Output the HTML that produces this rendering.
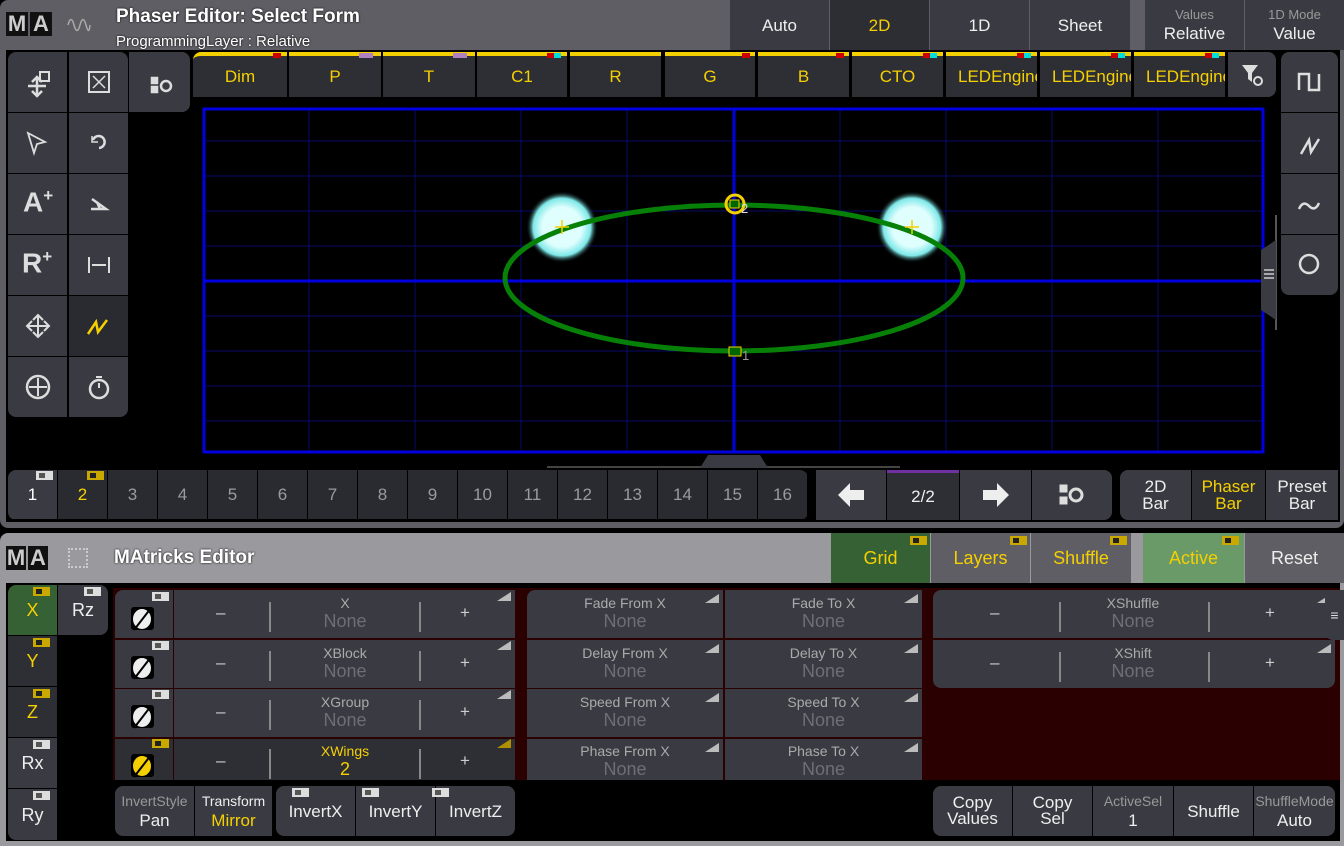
<!DOCTYPE html>
<html><head><meta charset="utf-8"><style>
*{box-sizing:border-box;margin:0;padding:0}
body{width:1344px;height:846px;background:#000;position:relative;overflow:hidden;font-family:"Liberation Sans",sans-serif;color:#eee}
.a{position:absolute}
.b{position:absolute;background:#3a3b42;display:flex;align-items:center;justify-content:center;text-align:center;line-height:1}
.y{color:#f5d000 !important}
.g{color:#888}
.tab{position:absolute;top:52px;height:45px;background:#2e2f35;border-top:4px solid #f5d000;color:#f5d000;font-size:17px;display:flex;align-items:center;justify-content:center;overflow:hidden;white-space:nowrap}
.pg{position:absolute;top:470px;width:49px;height:49px;background:#2a2b30;color:#9a9aa0;font-size:17px;display:flex;align-items:center;justify-content:center}
.tool{position:absolute;width:59px;height:60px;background:#3a3b42}
.tog{position:absolute;width:17px;height:9px;background:#ddd;border:1px solid #ddd}
.tog::after{content:"";position:absolute;left:2px;top:1px;width:6px;height:5px;background:#555}
.togy{background:#c9a800;border-color:#c9a800}
.togy::after{background:#222}
.cell{position:absolute;background:#3a3b42;text-align:center}
.lbl{font-size:14px;color:#aaa}
.val{font-size:18px;color:#6e6e74}
.tri{position:absolute;right:4px;top:4px;width:0;height:0;border-left:14px solid transparent;border-bottom:9px solid #bbb}
</style></head><body>
<div class="a" style="left:0;top:0;width:1344px;height:528px;background:#5e5e64;border-radius:8px"></div>
<div class="a" style="left:6px;top:50px;width:1334px;height:472px;background:#000"></div>
<div class="a" style="left:6px;top:12px;width:22px;height:24px;background:#111;color:#ccc;font-weight:bold;font-size:22px;text-align:center;line-height:24px">M</div>
<div class="a" style="left:30px;top:12px;width:22px;height:24px;background:#111;color:#ccc;font-weight:bold;font-size:22px;text-align:center;line-height:24px">A</div>
<svg class="a" style="left:66px;top:14px" width="26" height="22"><path d="M2 11 Q5 0 8 11 T14 11 T20 11 T24 11" stroke="#aaa" fill="none" stroke-width="1.5"/></svg>
<div class="a" style="left:116px;top:6px;font-size:19px;color:#fff;font-weight:bold;text-shadow:0 0 2px #000">Phaser Editor: Select Form</div>
<div class="a" style="left:116px;top:33px;font-size:15px;color:#fff;text-shadow:0 0 2px #000">ProgrammingLayer : Relative</div>
<div class="b" style="left:730px;top:0;width:99px;height:50px;font-size:17px">Auto</div>
<div class="b y" style="left:830px;top:0;width:99px;height:50px;font-size:17px;background:#2d2e34">2D</div>
<div class="b" style="left:930px;top:0;width:99px;height:50px;font-size:17px">1D</div>
<div class="b" style="left:1030px;top:0;width:100px;height:50px;font-size:17px">Sheet</div>
<div class="b" style="left:1145px;top:0;width:99px;height:50px;flex-direction:column"><span style="font-size:13px;color:#999">Values</span><span style="font-size:17px;margin-top:4px">Relative</span></div>
<div class="b" style="left:1245px;top:0;width:99px;height:50px;flex-direction:column"><span style="font-size:13px;color:#999">1D Mode</span><span style="font-size:17px;margin-top:4px">Value</span></div>
<div class="a" style="left:8px;top:52px;width:182px;height:60px;background:#000;border-radius:8px;overflow:hidden"><div class="a" style="left:121px;top:0;width:61px;height:60px;background:#3a3b42"></div></div>
<div class="a" style="left:8px;top:52px;width:120px;height:365px;background:#000;border-radius:8px;overflow:hidden">
<div class="tool" style="left:0;top:0"></div><div class="tool" style="left:61px;top:0"></div>
<div class="tool" style="left:0;top:61px"></div><div class="tool" style="left:61px;top:61px"></div>
<div class="tool" style="left:0;top:122px"></div><div class="tool" style="left:61px;top:122px"></div>
<div class="tool" style="left:0;top:183px"></div><div class="tool" style="left:61px;top:183px"></div>
<div class="tool" style="left:0;top:244px"></div><div class="tool" style="left:61px;top:244px;background:#2a2b30"></div>
<div class="tool" style="left:0;top:305px"></div><div class="tool" style="left:61px;top:305px"></div>
</div>
<svg class="a" style="left:0;top:52px" width="190" height="365" fill="none" stroke="#ddd" stroke-width="2.5">
<path d="M28 34 L46 34 M37 26 L37 44 M32 30 L37 25 L42 30 M32 39 L37 44 L42 39"/><rect x="40" y="20" width="9" height="9" stroke-width="2"/>
<rect x="89" y="20" width="20" height="20" stroke-width="2"/><path d="M93 24 L105 36 M105 24 L93 36" stroke-width="1.5"/>
<path d="M152 26 h5 v5 h-5z M152 35 h5 v5 h-5z" fill="#ddd"/><circle cx="166" cy="34" r="5"/>
<path d="M28 81 L45 90 L37 92 L34 101 Z" stroke-width="1.8"/>
<path d="M93 88 A6 6 0 1 1 99 96" /><path d="M92 84 L92 90 L98 90" stroke-width="1.5"/>
<path d="M91 157 L106 157 L92 147 M97 150 L100 157"/>
<path d="M89 205 v16 M109 205 v16 M92 213 h14" stroke-width="2"/>
<path d="M27 274 h22 M38 263 v22 M33 268 l5 -5 5 5 M33 280 l5 5 5 -5 M32 269 l-5 5 5 5 M44 269 l5 5 -5 5" stroke-width="2"/>
<path d="M88 282 L96 270 L98 280 L107 268" stroke="#f5d000"/>
<circle cx="38" cy="335" r="11"/><path d="M38 326 v18 M29 335 h18" stroke-width="2"/>
<circle cx="99" cy="337" r="9"/><path d="M96 325 h6 M99 331 v5" stroke-width="2"/>
</svg>
<div class="a" style="left:23px;top:186px;font-size:28px;font-weight:bold;color:#ddd">A<sup style="font-size:17px">+</sup></div>
<div class="a" style="left:22px;top:247px;font-size:28px;font-weight:bold;color:#ddd">R<sup style="font-size:17px">+</sup></div>
<div class="tab" style="left:193px;width:94px;border-radius:8px 0 0 0">Dim</div>
<div class="tab" style="left:289px;width:92px">P</div>
<div class="tab" style="left:383px;width:92px">T</div>
<div class="tab" style="left:477px;width:90px">C1</div>
<div class="tab" style="left:570px;width:91px">R</div>
<div class="tab" style="left:665px;width:90px">G</div>
<div class="tab" style="left:758px;width:91px">B</div>
<div class="tab" style="left:852px;width:91px">CTO</div>
<div class="tab" style="left:946px;width:91px;justify-content:flex-start;padding-left:12px">LEDEngine</div>
<div class="tab" style="left:1040px;width:91px;justify-content:flex-start;padding-left:12px">LEDEngine</div>
<div class="tab" style="left:1134px;width:91px;justify-content:flex-start;padding-left:12px">LEDEngine</div>
<div class="b" style="left:1228px;top:52px;width:48px;height:45px;border-radius:0 8px 8px 0"><svg width="26" height="26" fill="#ddd"><path d="M3 3 h16 l-6 8 v9 l-4 -3 v-6z"/><circle cx="19" cy="19" r="4" fill="none" stroke="#ddd" stroke-width="2"/></svg></div>
<div class="a" style="left:273px;top:53px;width:8px;height:5px;background:#c00"></div>
<div class="a" style="left:359px;top:53px;width:14px;height:5px;background:#b080c0"></div>
<div class="a" style="left:453px;top:53px;width:14px;height:5px;background:#b080c0"></div>
<div class="a" style="left:547px;top:53px;width:14px;height:5px;background:#c00;border-right:7px solid #0dd"></div>
<div class="a" style="left:742px;top:53px;width:8px;height:5px;background:#c00"></div>
<div class="a" style="left:836px;top:53px;width:8px;height:5px;background:#c00"></div>
<div class="a" style="left:923px;top:53px;width:14px;height:5px;background:#c00;border-right:7px solid #0dd"></div>
<div class="a" style="left:1017px;top:53px;width:14px;height:5px;background:#c00;border-right:7px solid #0dd"></div>
<div class="a" style="left:1111px;top:53px;width:14px;height:5px;background:#c00;border-right:7px solid #0dd"></div>
<div class="a" style="left:1205px;top:53px;width:14px;height:5px;background:#c00;border-right:7px solid #0dd"></div>
<div class="a" style="left:1281px;top:52px;width:57px;height:243px;background:#000;border-radius:8px;overflow:hidden">
<div class="a" style="left:0;top:0;width:57px;height:60px;background:#3a3b42"></div>
<div class="a" style="left:0;top:61px;width:57px;height:60px;background:#3a3b42"></div>
<div class="a" style="left:0;top:122px;width:57px;height:60px;background:#3a3b42"></div>
<div class="a" style="left:0;top:183px;width:57px;height:60px;background:#3a3b42"></div>
</div>
<svg class="a" style="left:1281px;top:52px" width="57" height="243" fill="none" stroke="#ddd" stroke-width="2.5">
<path d="M18 38 V22 H28 V38 H38 V22"/><path d="M20 102 L28 88 L30 100 L38 87"/><path d="M18 157 Q22 148 28 154 T38 151"/><circle cx="28" cy="212" r="9"/>
</svg>
<svg class="a" style="left:0;top:0" width="1344" height="470">
<defs><radialGradient id="gl"><stop offset="0.55" stop-color="#dffefe"/><stop offset="0.8" stop-color="#7ee8e8"/><stop offset="1" stop-color="#000" stop-opacity="0"/></radialGradient></defs>
<g stroke="#0a0a6a" stroke-width="1">
<path d="M203 141 H1264 M203 176 H1264 M203 211 H1264 M203 246 H1264 M203 316 H1264 M203 351 H1264 M203 386 H1264 M203 421 H1264"/>
<path d="M309 108 V453 M415 108 V453 M521 108 V453 M627 108 V453 M840 108 V453 M946 108 V453 M1052 108 V453 M1158 108 V453"/>
</g>
<rect x="204" y="109" width="1059" height="343" fill="none" stroke="#0000e0" stroke-width="3"/>
<path d="M734 109 V452 M204 281 H1263" stroke="#0000e0" stroke-width="3"/>
<circle cx="562" cy="227" r="36" fill="url(#gl)"/>
<circle cx="912" cy="227" r="36" fill="url(#gl)"/>
<ellipse cx="734" cy="278" rx="229" ry="73" fill="none" stroke="#078007" stroke-width="5"/>
<path d="M555 227 h14 M562 220 v14 M905 227 h14 M912 220 v14" stroke="#f5d000" stroke-width="1.5"/>
<circle cx="735" cy="204" r="9" fill="none" stroke="#f5d000" stroke-width="3"/>
<rect x="730" y="200" width="9" height="8" fill="#060" stroke="#f5d000"/>
<text x="741" y="213" fill="#ddd" font-size="13" font-family="Liberation Sans">2</text>
<rect x="729" y="347" width="12" height="9" fill="#060" stroke="#f5d000"/>
<text x="742" y="360" fill="#999" font-size="13" font-family="Liberation Sans">1</text>
<path d="M547 467 H900" stroke="#444" stroke-width="2"/>
<path d="M700 468 L708 455 H760 L768 468Z" fill="#3a3b42"/>
<path d="M1276 215 V330" stroke="#555" stroke-width="2"/>
<path d="M1261 250 L1276 240 V320 L1261 310Z" fill="#3a3b42"/>
<path d="M1264 270 h10 M1264 274 h10 M1264 278 h10" stroke="#ccc" stroke-width="1.5"/>
</svg>
<div class="a" style="left:8px;top:470px;width:800px;height:50px;background:#000;border-radius:8px;overflow:hidden">
<div class="pg" style="left:0;top:0;background:#3a3b42;color:#fff">1</div>
<div class="pg y" style="left:50px;top:0">2</div>
<div class="pg" style="left:100px;top:0">3</div><div class="pg" style="left:150px;top:0">4</div><div class="pg" style="left:200px;top:0">5</div><div class="pg" style="left:250px;top:0">6</div><div class="pg" style="left:300px;top:0">7</div><div class="pg" style="left:350px;top:0">8</div><div class="pg" style="left:400px;top:0">9</div><div class="pg" style="left:450px;top:0">10</div><div class="pg" style="left:500px;top:0">11</div><div class="pg" style="left:550px;top:0">12</div><div class="pg" style="left:600px;top:0">13</div><div class="pg" style="left:650px;top:0">14</div><div class="pg" style="left:700px;top:0">15</div><div class="pg" style="left:750px;top:0">16</div>
</div>
<div class="tog" style="left:36px;top:471px"></div><div class="tog togy" style="left:87px;top:471px"></div>
<div class="b" style="left:816px;top:470px;width:70px;height:50px"><svg width="26" height="24"><path d="M0 12 L12 0 V7 H26 V17 H12 V24Z" fill="#eee"/></svg></div>
<div class="b" style="left:887px;top:470px;width:72px;height:50px;font-size:17px;background:#2e2f35;border-top:3px solid #7030a0">2/2</div>
<div class="b" style="left:960px;top:470px;width:71px;height:50px"><svg width="26" height="24"><path d="M26 12 L14 0 V7 H0 V17 H14 V24Z" fill="#eee"/></svg></div>
<div class="b" style="left:1032px;top:470px;width:80px;height:50px;border-radius:0 8px 8px 0"><svg width="26" height="26" fill="none" stroke="#ddd" stroke-width="3"><path d="M2 4 h5 v5 h-5z M2 16 h5 v5 h-5z" fill="#ddd"/><circle cx="17" cy="13" r="6"/></svg></div>
<div class="b" style="left:1120px;top:470px;width:71px;height:50px;font-size:17px;border-radius:8px 0 0 8px;line-height:17px">2D<br>Bar</div>
<div class="b y" style="left:1192px;top:470px;width:73px;height:50px;font-size:17px;background:#2e2f35;line-height:17px">Phaser<br>Bar</div>
<div class="b" style="left:1266px;top:470px;width:72px;height:50px;font-size:17px;line-height:17px">Preset<br>Bar</div>
<div class="a" style="left:0;top:533px;width:1344px;height:313px;background:#99999e;border-radius:8px 8px 0 0"></div>
<div class="a" style="left:6px;top:583px;width:1334px;height:258px;background:#000"></div>
<div class="a" style="left:6px;top:546px;width:20px;height:24px;background:#111;color:#ccc;font-weight:bold;font-size:22px;text-align:center;line-height:24px">M</div>
<div class="a" style="left:28px;top:546px;width:20px;height:24px;background:#111;color:#ccc;font-weight:bold;font-size:22px;text-align:center;line-height:24px">A</div>
<div class="a" style="left:68px;top:548px;width:20px;height:20px;border:2px dotted #ccc"></div>
<div class="a" style="left:114px;top:547px;font-size:19px;color:#fff;font-weight:bold;text-shadow:0 0 2px #000">MAtricks Editor</div>
<div class="b y" style="left:831px;top:533px;width:99px;height:50px;background:#356134;font-size:18px">Grid</div>
<div class="b y" style="left:931px;top:533px;width:99px;height:50px;background:#5e5e64;font-size:18px">Layers</div>
<div class="b y" style="left:1031px;top:533px;width:100px;height:50px;background:#5e5e64;font-size:18px">Shuffle</div>
<div class="b y" style="left:1143px;top:533px;width:101px;height:50px;background:#6a9a68;font-size:18px">Active</div>
<div class="b" style="left:1245px;top:533px;width:99px;height:50px;background:#5e5e64;font-size:18px">Reset</div>
<div class="tog togy" style="left:910px;top:536px"></div><div class="tog togy" style="left:1010px;top:536px"></div><div class="tog togy" style="left:1110px;top:536px"></div><div class="tog togy" style="left:1222px;top:536px"></div>
<div class="a" style="left:8px;top:585px;width:100px;height:255px;background:#000;border-radius:8px;overflow:hidden">
<div class="b y" style="left:0;top:0;width:49px;height:50px;background:#356134;font-size:18px">X</div>
<div class="b" style="left:50px;top:0;width:50px;height:50px;font-size:18px;border-radius:0 0 8px 0">Rz</div>
<div class="b y" style="left:0;top:51px;width:49px;height:50px;background:#2e2f35;font-size:18px">Y</div>
<div class="b y" style="left:0;top:102px;width:49px;height:50px;background:#2e2f35;font-size:18px">Z</div>
<div class="b" style="left:0;top:153px;width:49px;height:50px;font-size:18px">Rx</div>
<div class="b" style="left:0;top:204px;width:49px;height:51px;font-size:18px">Ry</div>
</div>
<div class="tog togy" style="left:33px;top:587px"></div><div class="tog" style="left:84px;top:587px"></div>
<div class="tog togy" style="left:33px;top:638px"></div><div class="tog togy" style="left:33px;top:689px"></div>
<div class="tog" style="left:33px;top:740px"></div><div class="tog" style="left:33px;top:791px"></div>
<div class="a" style="left:113px;top:588px;width:1227px;height:192px;background:#2a0000"></div>
<div class="cell" style="left:115px;top:590px;width:400px;height:48px;border-radius:8px 0 0 0"></div>
<div class="cell" style="left:115px;top:640px;width:400px;height:48px"></div>
<div class="cell" style="left:115px;top:689px;width:400px;height:48px"></div>
<div class="cell" style="left:115px;top:739px;width:400px;height:41px;background:#2e2f35"></div>
<div class="a" style="left:173px;top:590px;width:1px;height:190px;background:#2a0000"></div>
<svg class="a" style="left:115px;top:590px" width="400" height="190">
<g fill="none" stroke="#888" stroke-width="2"><path d="M155 12 v30 M305 12 v30 M155 61 v30 M305 61 v30 M155 110 v30 M305 110 v30 M155 159 v30 M305 159 v30"/></g>
<g><rect x="16" y="17" width="23" height="23" rx="3" fill="#000"/><rect x="16" y="66" width="23" height="23" rx="3" fill="#000"/><rect x="16" y="115" width="23" height="23" rx="3" fill="#000"/><rect x="16" y="164" width="23" height="23" rx="3" fill="#000"/></g>
<g stroke-width="2"><ellipse cx="27" cy="29" rx="8" ry="9" fill="#eee" stroke="#eee"/><path d="M19 40 L36 18" stroke="#000"/><ellipse cx="27" cy="78" rx="8" ry="9" fill="#eee" stroke="#eee"/><path d="M19 89 L36 67" stroke="#000"/><ellipse cx="27" cy="127" rx="8" ry="9" fill="#eee" stroke="#eee"/><path d="M19 138 L36 116" stroke="#000"/><ellipse cx="27" cy="176" rx="8" ry="9" fill="#f5d000" stroke="#f5d000"/><path d="M19 187 L36 165" stroke="#000"/></g>
</svg>
<div class="tog" style="left:152px;top:592px"></div><div class="tog" style="left:152px;top:641px"></div><div class="tog" style="left:152px;top:690px"></div><div class="tog togy" style="left:152px;top:739px"></div>
<div class="a" style="left:216px;top:603px;font-size:17px;color:#ccc">–</div><div class="a" style="left:460px;top:603px;font-size:17px;color:#ccc">+</div>
<div class="a" style="left:216px;top:653px;font-size:17px;color:#ccc">–</div><div class="a" style="left:460px;top:653px;font-size:17px;color:#ccc">+</div>
<div class="a" style="left:216px;top:702px;font-size:17px;color:#ccc">–</div><div class="a" style="left:460px;top:702px;font-size:17px;color:#ccc">+</div>
<div class="a" style="left:216px;top:751px;font-size:17px;color:#ccc">–</div><div class="a" style="left:460px;top:751px;font-size:17px;color:#ccc">+</div>
<div class="a" style="left:270px;top:595px;width:150px;text-align:center"><div class="lbl">X</div><div class="val">None</div></div>
<div class="a" style="left:270px;top:645px;width:150px;text-align:center"><div class="lbl">XBlock</div><div class="val">None</div></div>
<div class="a" style="left:270px;top:694px;width:150px;text-align:center"><div class="lbl">XGroup</div><div class="val">None</div></div>
<div class="a" style="left:270px;top:743px;width:150px;text-align:center"><div class="lbl y">XWings</div><div class="val y">2</div></div>
<div class="tri" style="left:497px;top:592px"></div><div class="tri" style="left:497px;top:641px"></div><div class="tri" style="left:497px;top:690px"></div><div class="tri" style="left:497px;top:739px;border-bottom-color:#b09000"></div>
<div class="cell" style="left:527px;top:590px;width:196px;height:48px;border-radius:8px 0 0 0;padding-top:5px"><div class="lbl">Fade From X</div><div class="val">None</div><div class="tri"></div></div>
<div class="cell" style="left:725px;top:590px;width:197px;height:48px;padding-top:5px"><div class="lbl">Fade To X</div><div class="val">None</div><div class="tri"></div></div>
<div class="cell" style="left:527px;top:640px;width:196px;height:48px;padding-top:5px"><div class="lbl">Delay From X</div><div class="val">None</div><div class="tri"></div></div>
<div class="cell" style="left:725px;top:640px;width:197px;height:48px;padding-top:5px"><div class="lbl">Delay To X</div><div class="val">None</div><div class="tri"></div></div>
<div class="cell" style="left:527px;top:689px;width:196px;height:48px;padding-top:5px"><div class="lbl">Speed From X</div><div class="val">None</div><div class="tri"></div></div>
<div class="cell" style="left:725px;top:689px;width:197px;height:48px;padding-top:5px"><div class="lbl">Speed To X</div><div class="val">None</div><div class="tri"></div></div>
<div class="cell" style="left:527px;top:739px;width:196px;height:41px;padding-top:4px;overflow:hidden"><div class="lbl">Phase From X</div><div class="val">None</div><div class="tri"></div></div>
<div class="cell" style="left:725px;top:739px;width:197px;height:41px;padding-top:4px;overflow:hidden"><div class="lbl">Phase To X</div><div class="val">None</div><div class="tri"></div></div>
<div class="cell" style="left:933px;top:590px;width:402px;height:48px;border-radius:8px 0 0 0"><div class="tri"></div></div>
<div class="cell" style="left:933px;top:640px;width:402px;height:48px;border-radius:0 0 8px 8px"><div class="tri"></div></div>
<svg class="a" style="left:933px;top:590px" width="402" height="98"><path d="M127 12 v30 M276 12 v30 M127 62 v30 M276 62 v30" stroke="#888" stroke-width="2"/></svg>
<div class="a" style="left:990px;top:603px;font-size:17px;color:#ccc">–</div><div class="a" style="left:1265px;top:603px;font-size:17px;color:#ccc">+</div>
<div class="a" style="left:990px;top:653px;font-size:17px;color:#ccc">–</div><div class="a" style="left:1265px;top:653px;font-size:17px;color:#ccc">+</div>
<div class="a" style="left:1060px;top:595px;width:146px;text-align:center"><div class="lbl">XShuffle</div><div class="val">None</div></div>
<div class="a" style="left:1060px;top:645px;width:146px;text-align:center"><div class="lbl">XShift</div><div class="val">None</div></div>
<div class="a" style="left:1325px;top:590px;width:19px;height:50px;background:#3a3b42;border-radius:8px 0 0 8px;color:#ddd;font-size:14px;line-height:50px;text-align:center">≡</div>
<div class="a" style="left:115px;top:786px;width:400px;height:50px;background:#000;border-radius:8px;overflow:hidden">
<div class="b" style="left:0;top:0;width:79px;height:50px;flex-direction:column"><span style="font-size:14px;color:#999">InvertStyle</span><span style="font-size:17px;margin-top:4px">Pan</span></div>
<div class="b" style="left:80px;top:0;width:77px;height:50px;flex-direction:column"><span style="font-size:14px">Transform</span><span style="font-size:17px;margin-top:4px" class="y">Mirror</span></div>
<div class="b" style="left:161px;top:0;width:79px;height:50px;font-size:17px;border-radius:8px 0 0 8px">InvertX</div>
<div class="b" style="left:241px;top:0;width:79px;height:50px;font-size:17px">InvertY</div>
<div class="b" style="left:321px;top:0;width:79px;height:50px;font-size:17px">InvertZ</div>
</div>
<div class="tog" style="left:292px;top:788px"></div><div class="tog" style="left:362px;top:788px"></div><div class="tog" style="left:432px;top:788px"></div>
<div class="a" style="left:933px;top:786px;width:402px;height:50px;background:#000;border-radius:8px;overflow:hidden">
<div class="b" style="left:0;top:0;width:79px;height:50px;font-size:17px;line-height:16px">Copy<br>Values</div>
<div class="b" style="left:80px;top:0;width:79px;height:50px;font-size:17px;line-height:16px">Copy<br>Sel</div>
<div class="b" style="left:160px;top:0;width:80px;height:50px;flex-direction:column"><span style="font-size:14px;color:#999">ActiveSel</span><span style="font-size:17px;margin-top:4px">1</span></div>
<div class="b" style="left:241px;top:0;width:79px;height:50px;font-size:17px">Shuffle</div>
<div class="b" style="left:321px;top:0;width:81px;height:50px;flex-direction:column;overflow:hidden;white-space:nowrap"><span style="font-size:14px;color:#999">ShuffleMode</span><span style="font-size:17px;margin-top:4px">Auto</span></div>
</div>
</body></html>
